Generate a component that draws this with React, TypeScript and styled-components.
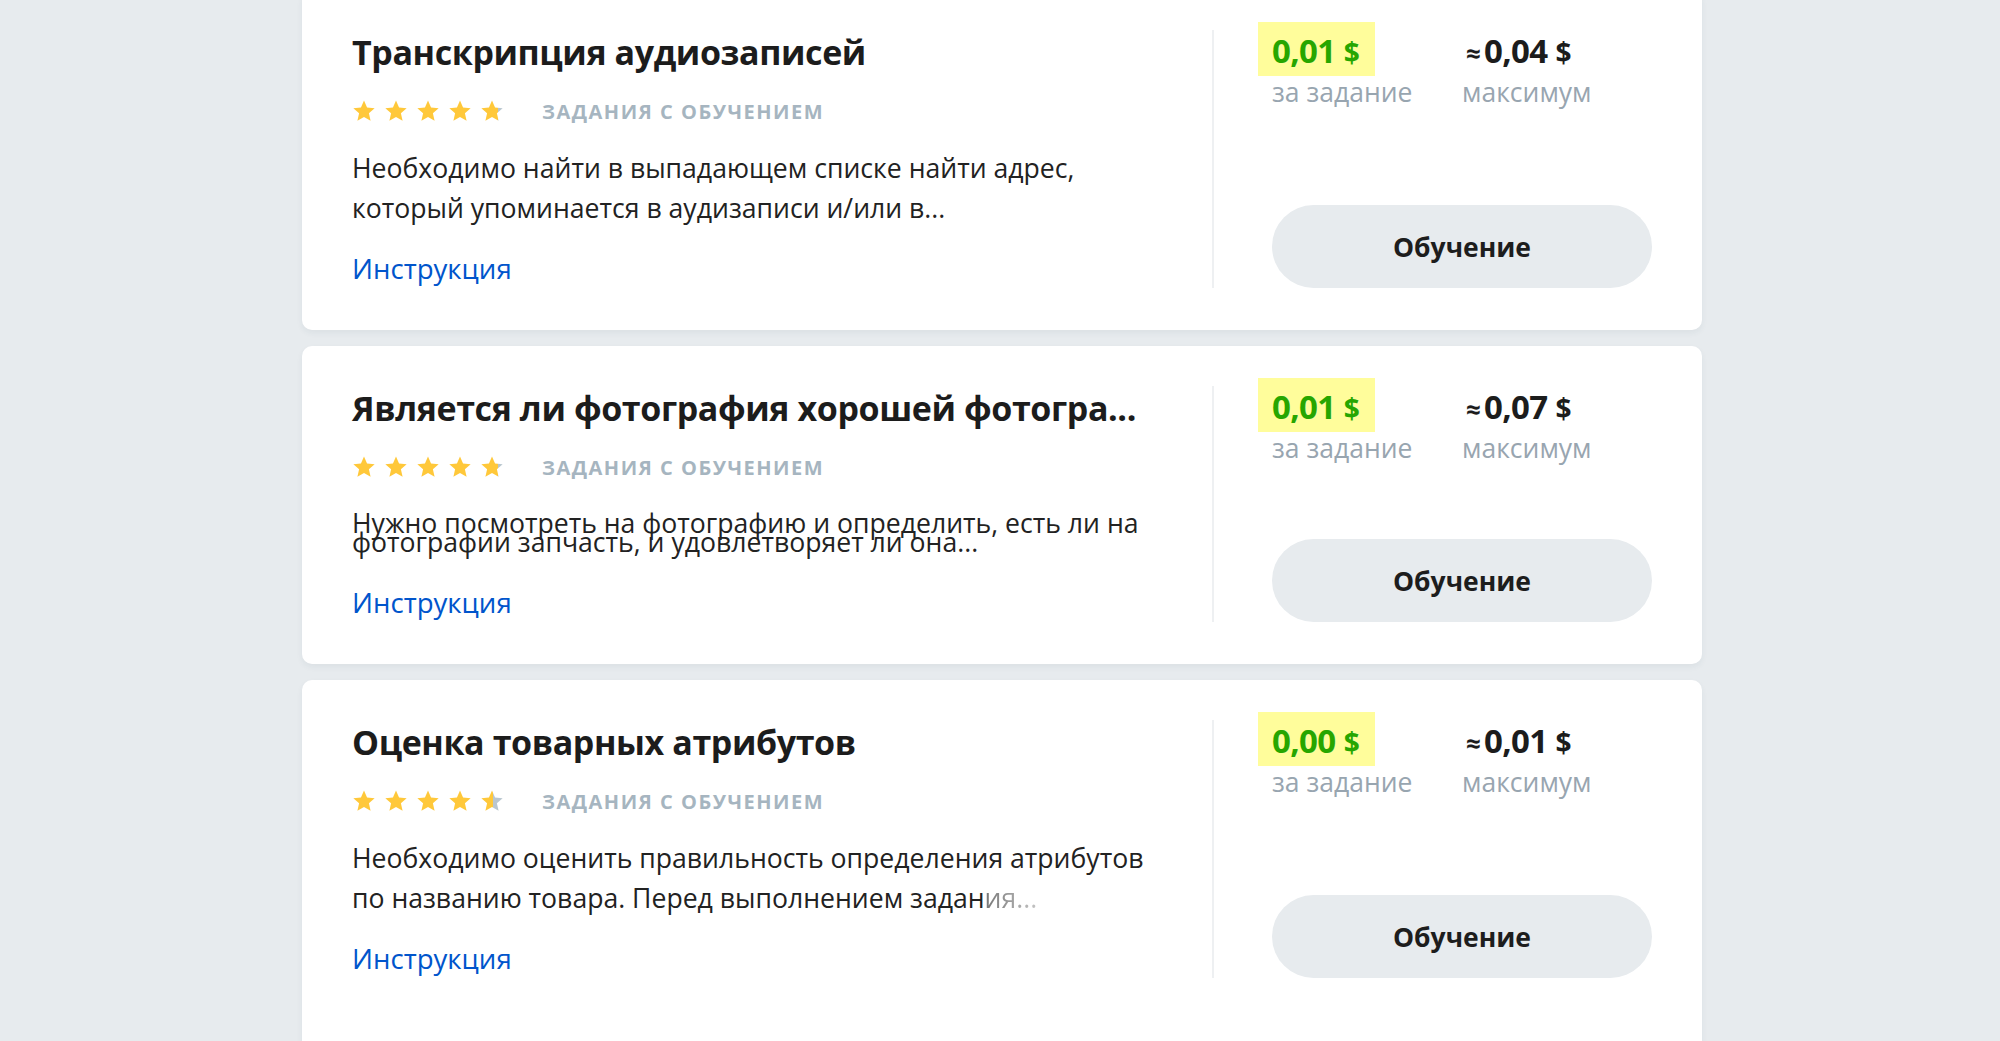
import React from "react";
import styled, { createGlobalStyle } from "styled-components";

const GlobalStyle = createGlobalStyle`
  html, body {
    margin: 0;
    padding: 0;
    background: #e7ebee;
    font-family: "Open Sans", "Noto Sans", sans-serif;
    overflow: hidden;
  }
`;

type Task = {
  title: string;
  rating: number;
  lines: string[];
  fadeTail?: string;
  tight?: boolean;
  price: string;
  max: string;
};

const tasks: Task[] = [
  {
    title: "Транскрипция аудиозаписей",
    rating: 4.8,
    lines: [
      "Необходимо найти в выпадающем списке найти адрес,",
      "который упоминается в аудизаписи и/или в...",
    ],
    price: "0,01",
    max: "0,04",
  },
  {
    title: "Является ли фотография хорошей фотогра...",
    rating: 4.8,
    lines: [
      "Нужно посмотреть на фотографию и определить, есть ли на",
      "фотографии запчасть, и удовлетворяет ли она...",
    ],
    tight: true,
    price: "0,01",
    max: "0,07",
  },
  {
    title: "Оценка товарных атрибутов",
    rating: 4.55,
    lines: [
      "Необходимо оценить правильность определения атрибутов",
      "по названию товара. Перед выполнением задан",
    ],
    fadeTail: "ия...",
    price: "0,00",
    max: "0,01",
  },
];

const List = styled.main`
  display: flex;
  flex-direction: column;
  gap: 16px;
  width: 1400px;
  margin: -10px 0 0 302px;
`;

const Card = styled.section<{ $last?: boolean }>`
  display: flex;
  background: #fff;
  border-radius: 10px;
  padding: 40px 50px ${(p) => (p.$last ? "90px" : "42px")};
  box-shadow: 0 3px 6px rgba(40, 60, 80, 0.06);
`;

const Info = styled.div`
  flex: 1;
  min-width: 0;
  display: flex;
  flex-direction: column;
`;

const Title = styled.h2`
  margin: 0;
  font-size: 34px;
  line-height: 44px;
  font-weight: 700;
  color: #1c1c1c;
  white-space: nowrap;
  letter-spacing: -0.4px;
`;

const Meta = styled.div`
  display: flex;
  align-items: center;
  gap: 38px;
  height: 28px;
  margin-top: 23px;
`;

const Stars = styled.div`
  display: flex;
  gap: 8px;
`;

const Tag = styled.span`
  font-size: 20px;
  font-weight: 700;
  letter-spacing: 1.5px;
  text-transform: uppercase;
  color: #a6b5c0;
`;

const Description = styled.p<{ $tight?: boolean }>`
  margin: 23px 0 0;
  font-size: 26.6px;
  line-height: ${(p) => (p.$tight ? "19px" : "40px")};
  padding: ${(p) => (p.$tight ? "10px 0" : "0")};
  color: #222;
`;

const Line = styled.span`
  display: block;
  white-space: nowrap;
`;

const Fade = styled.span`
  background: linear-gradient(to right, #777 0%, #c4c4c4 100%);
  -webkit-background-clip: text;
  background-clip: text;
  color: transparent;
`;

const Link = styled.a`
  align-self: flex-start;
  margin-top: 20px;
  font-size: 27.6px;
  line-height: 40px;
  color: #0055cc;
  text-decoration: none;
`;

const Divider = styled.div`
  width: 2px;
  background: #eef0f2;
  margin: 0 58px 0 60px;
`;

const Side = styled.div`
  width: 380px;
  display: flex;
  flex-direction: column;
  justify-content: space-between;
`;

const Prices = styled.div`
  display: grid;
  grid-template-columns: 190px auto;
`;

const PriceCol = styled.div`
  display: flex;
  flex-direction: column;
  align-items: flex-start;
`;

const Value = styled.div<{ $highlight?: boolean }>`
  display: inline-flex;
  align-items: baseline;
  height: 54px;
  line-height: 58px;
  margin-top: -8px;
  padding: ${(p) => (p.$highlight ? "0 15px 0 14px" : "0 0 0 4px")};
  margin-left: ${(p) => (p.$highlight ? "-14px" : "0")};
  background: ${(p) => (p.$highlight ? "#fffd9b" : "transparent")};
  color: ${(p) => (p.$highlight ? "#27a600" : "#1c1c1c")};
  font-weight: 700;
`;

const Approx = styled.span`
  font-size: 26px;
  margin-right: 3px;
`;

const Amount = styled.span`
  font-size: 33px;
  letter-spacing: -0.6px;
`;

const Currency = styled.span`
  font-size: 28px;
  margin-left: 8px;
`;

const PriceLabel = styled.span`
  font-size: 26.5px;
  line-height: 30px;
  color: #98a5b0;
  margin-top: 1px;
`;

const Button = styled.button`
  width: 100%;
  height: 83px;
  border: none;
  border-radius: 42px;
  background: #e7ebee;
  font-family: "Open Sans", "Noto Sans", sans-serif;
  font-size: 26.5px;
  font-weight: 700;
  color: #1d1d1d;
  cursor: pointer;
`;

const STAR = "M12 1.6l3.05 7.02 7.6.7-5.75 5.02 1.7 7.46L12 17.9l-6.6 3.9 1.7-7.46L1.35 9.32l7.6-.7z";

const Star: React.FC<{ fill: number; id: string }> = ({ fill, id }) => (
  <svg width="24" height="24" viewBox="0 0 24 24">
    <defs>
      <linearGradient id={id}>
        <stop offset={fill} stopColor="#ffc83a" />
        <stop offset={fill} stopColor="#b9c6cf" />
      </linearGradient>
    </defs>
    <path d={STAR} fill={`url(#${id})`} />
  </svg>
);

const Rating: React.FC<{ value: number; name: string }> = ({ value, name }) => (
  <Stars>
    {[0, 1, 2, 3, 4].map((i) => (
      <Star key={i} id={`${name}-s${i}`} fill={Math.max(0, Math.min(1, value - i))} />
    ))}
  </Stars>
);

const TaskCard: React.FC<{ task: Task; index: number; last: boolean }> = ({ task, index, last }) => (
  <Card $last={last}>
    <Info>
      <Title>{task.title}</Title>
      <Meta>
        <Rating value={task.rating} name={`t${index}`} />
        <Tag>Задания с обучением</Tag>
      </Meta>
      <Description $tight={task.tight}>
        {task.lines.map((l, i) => (
          <Line key={i}>
            {l}
            {i === task.lines.length - 1 && task.fadeTail && <Fade>{task.fadeTail}</Fade>}
          </Line>
        ))}
      </Description>
      <Link href="#">Инструкция</Link>
    </Info>
    <Divider />
    <Side>
      <Prices>
        <PriceCol>
          <Value $highlight>
            <Amount>{task.price}</Amount>
            <Currency>$</Currency>
          </Value>
          <PriceLabel>за задание</PriceLabel>
        </PriceCol>
        <PriceCol>
          <Value>
            <Approx>≈</Approx>
            <Amount>{task.max}</Amount>
            <Currency>$</Currency>
          </Value>
          <PriceLabel>максимум</PriceLabel>
        </PriceCol>
      </Prices>
      <Button>Обучение</Button>
    </Side>
  </Card>
);

export default function App() {
  return (
    <>
      <GlobalStyle />
      <List>
        {tasks.map((t, i) => (
          <TaskCard key={i} task={t} index={i} last={i === tasks.length - 1} />
        ))}
      </List>
    </>
  );
}
